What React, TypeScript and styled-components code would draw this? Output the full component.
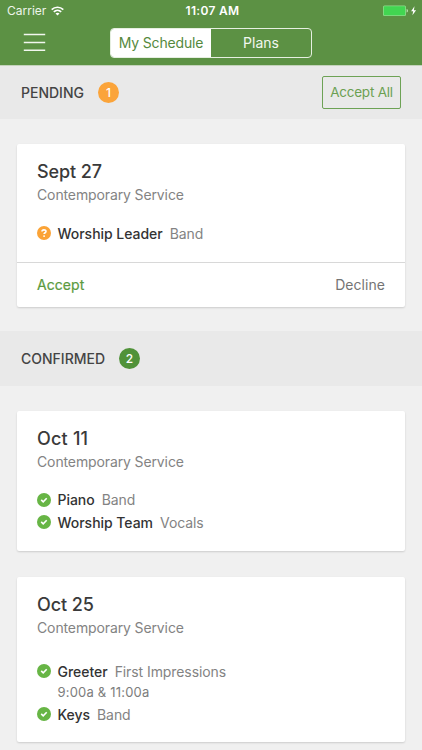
import React from "react";
import styled, { createGlobalStyle } from "styled-components";

const GlobalStyle = createGlobalStyle`
  * { box-sizing: border-box; }
  body {
    margin: 0;
    background: #f0f0f0;
    font-family: Inter, "Liberation Sans", sans-serif;
    font-size: 14px;
    color: #333;
    overflow: hidden;
  }
  button { font: inherit; margin: 0; padding: 0; border: 0; background: none; }
  h2, h3, p, ul { margin: 0; padding: 0; font-weight: 400; }
`;

const Screen = styled.div`
  width: 422px;
  height: 750px;
  overflow: hidden;
  background: #f0f0f0;
`;

const Header = styled.header`
  height: 66px;
  background: #5c9144;
  border-bottom: 1px solid #c3d2bb;
  color: #fff;
`;

const StatusBar = styled.div`
  display: grid;
  grid-template-columns: 1fr auto 1fr;
  align-items: center;
  height: 22px;
  padding: 0 4px 0 7px;
  line-height: 22px;
`;

const Carrier = styled.div`
  display: flex;
  align-items: center;
  gap: 5px;
  font-size: 12px;
  letter-spacing: 0;
  color: #eef5ea;
`;

const Clock = styled.div`
  font-size: 12px;
  font-weight: 600;
  letter-spacing: 0.3px;
`;

const Power = styled.div`
  display: flex;
  justify-content: flex-end;
`;

const NavBar = styled.nav`
  display: flex;
  align-items: center;
  height: 42px;
  padding-left: 23px;
`;

const MenuButton = styled.button`
  display: flex;
  width: 23px;
  margin-right: 64px;
`;

const Segments = styled.div`
  display: flex;
  width: 202px;
  height: 30px;
  border: 1px solid #e6efe1;
  border-radius: 4px;
  overflow: hidden;
`;

const Segment = styled.button<{ $active?: boolean }>`
  flex: 1;
  line-height: 28px;
  letter-spacing: ${(p) => (p.$active ? -0.17 : 0)}px;
  background: ${(p) => (p.$active ? "#fff" : "transparent")};
  color: ${(p) => (p.$active ? "#55893d" : "#f2f7ef")};
`;

const SectionBar = styled.div<{ $height: number }>`
  display: flex;
  align-items: center;
  height: ${(p) => p.$height}px;
  padding: 0 21px;
  background: #e9e9e9;
`;

const SectionTitle = styled.h2`
  font-size: 14px;
  line-height: 21px;
  font-weight: 500;
  color: #444;
`;

const Count = styled.span<{ $color: string }>`
  width: 21px;
  height: 21px;
  margin-left: 14px;
  border-radius: 50%;
  background: ${(p) => p.$color};
  color: #fff;
  font-size: 12px;
  font-weight: 500;
  line-height: 21px;
  text-align: center;
`;

const AcceptAll = styled.button`
  width: 79px;
  height: 33px;
  margin-left: auto;
  padding-bottom: 2px;
  border: 1px solid #6da255;
  border-radius: 2px;
  color: #6ba052;
  font-size: 13.5px;
  letter-spacing: -0.22px;
`;

const SectionHeading = styled.div`
  display: flex;
  align-items: center;
  padding-bottom: 1px;
`;

const CardList = styled.div`
  display: flex;
  flex-direction: column;
  gap: 26px;
  padding: 25px 17px 24px;
`;

const Card = styled.article<{ $height: number }>`
  display: flex;
  flex-direction: column;
  height: ${(p) => p.$height}px;
  padding: 15px 20px 0;
  border-radius: 2px;
  background: #fff;
  box-shadow: 0 1px 2px rgba(0, 0, 0, 0.15);
`;

const CardDate = styled.h3<{ $tracking?: number }>`
  font-size: 18px;
  line-height: 25px;
  font-weight: 500;
  letter-spacing: ${(p) => p.$tracking ?? -0.1}px;
  color: #3a3a3a;
`;

const Service = styled.p`
  line-height: 22px;
  letter-spacing: -0.12px;
  color: #838383;
`;

const Assignments = styled.ul<{ $top: number }>`
  margin-top: ${(p) => p.$top}px;
  list-style: none;
`;

const Assignment = styled.li`
  display: flex;
  align-items: center;
  height: 22.5px;
`;

const Role = styled.span`
  margin: 0 7px 0 6.5px;
  font-weight: 500;
  letter-spacing: -0.03px;
  color: #333;
`;

const Team = styled.span`
  letter-spacing: -0.08px;
  color: #838383;
`;

const Times = styled.li`
  padding-left: 20.5px;
  height: 20.5px;
  font-size: 13px;
  line-height: 18px;
  letter-spacing: 0.2px;
  color: #7d7d7d;
`;

const CardActions = styled.footer`
  display: flex;
  align-items: center;
  justify-content: space-between;
  height: 45px;
  margin: auto -20px 0;
  padding: 0 20px 2px;
  border-top: 1px solid #d8d8d8;
`;

const Action = styled.button<{ $primary?: boolean }>`
  letter-spacing: 0.05px;
  -webkit-text-stroke: ${(p) => (p.$primary ? "0.2px" : "0")};
  color: ${(p) => (p.$primary ? "#5b9a3e" : "#747474")};
`;

const WifiIcon = () => (
  <svg width="13" height="10" viewBox="0 0 13 10" fill="none" stroke="#fff" strokeWidth="1.6">
    <path d="M.7 3.6C3.9.4 9.1.4 12.3 3.6M2.8 5.8C4.9 3.8 8.1 3.8 10.2 5.8" />
    <path d="M6.5 9.4 4.5 7.4C5.6 6.4 7.4 6.4 8.5 7.4Z" fill="#fff" stroke="none" />
  </svg>
);

const BatteryIcon = () => (
  <svg width="36" height="12" viewBox="0 0 36 12">
    <rect x="1" y=".5" width="23" height="10.5" rx="1.5" fill="#8edb8a" />
    <rect x="1.8" y="1.3" width="21.4" height="8.9" rx=".7" fill="#42d651" />
    <path d="M24.6 4q1.4.2 1.4 1.7t-1.4 1.7z" fill="#b9e2b3" />
    <path d="M32.5 1.3 29.1 6.3h2.1l-.8 4 3.7-5.1h-2.2z" fill="#fff" />
  </svg>
);

const MenuIcon = () => (
  <svg width="23" height="20" viewBox="0 0 23 20" stroke="#f2f7ef" strokeWidth="1.5">
    <path d="M.8 1.4H22.2M.8 9.5H22.2M.8 17.3H22.2" />
  </svg>
);

const CheckIcon = () => (
  <svg width="14" height="14" viewBox="0 0 14 14">
    <circle cx="7" cy="7" r="7" fill="#67b545" />
    <path d="m4.2 6.9 2 1.9 3.5-3.6" fill="none" stroke="#fff" strokeWidth="1.6" />
  </svg>
);

const QuestionIcon = () => (
  <svg width="14" height="14" viewBox="0 0 14 14">
    <circle cx="7" cy="7" r="7" fill="#fba336" />
    <path d="M5 5.6C5 3.3 9 3.4 9 5.4 9 6.8 7.1 6.7 7.1 8.1" fill="none" stroke="#fff" strokeWidth="1.6" />
    <circle cx="7.1" cy="10.1" r=".95" fill="#fff" />
  </svg>
);

type Entry = { role: string; team: string; times?: string };

const AssignmentRows = ({ entries, pending }: { entries: Entry[]; pending?: boolean }) => (
  <>
    {entries.map((e) => (
      <React.Fragment key={e.role}>
        <Assignment>
          {pending ? <QuestionIcon /> : <CheckIcon />}
          <Role>{e.role}</Role>
          <Team>{e.team}</Team>
        </Assignment>
        {e.times && <Times>{e.times}</Times>}
      </React.Fragment>
    ))}
  </>
);

export default function App() {
  return (
    <Screen>
      <GlobalStyle />
      <Header>
        <StatusBar>
          <Carrier>Carrier <WifiIcon /></Carrier>
          <Clock>11:07 AM</Clock>
          <Power><BatteryIcon /></Power>
        </StatusBar>
        <NavBar>
          <MenuButton aria-label="Menu"><MenuIcon /></MenuButton>
          <Segments>
            <Segment $active>My Schedule</Segment>
            <Segment>Plans</Segment>
          </Segments>
        </NavBar>
      </Header>

      <SectionBar $height={53}>
        <SectionHeading>
          <SectionTitle>PENDING</SectionTitle>
          <Count $color="#fba43a">1</Count>
        </SectionHeading>
        <AcceptAll>Accept All</AcceptAll>
      </SectionBar>
      <CardList>
        <Card $height={163}>
          <CardDate>Sept 27</CardDate>
          <Service>Contemporary Service</Service>
          <Assignments $top={16}>
            <AssignmentRows pending entries={[{ role: "Worship Leader", team: "Band" }]} />
          </Assignments>
          <CardActions>
            <Action $primary>Accept</Action>
            <Action>Decline</Action>
          </CardActions>
        </Card>
      </CardList>

      <SectionBar $height={55}>
        <SectionHeading>
          <SectionTitle>CONFIRMED</SectionTitle>
          <Count $color="#509239">2</Count>
        </SectionHeading>
      </SectionBar>
      <CardList>
        <Card $height={140}>
          <CardDate $tracking={0.2}>Oct 11</CardDate>
          <Service>Contemporary Service</Service>
          <Assignments $top={15.5}>
            <AssignmentRows
              entries={[
                { role: "Piano", team: "Band" },
                { role: "Worship Team", team: "Vocals" },
              ]}
            />
          </Assignments>
        </Card>
        <Card $height={165}>
          <CardDate>Oct 25</CardDate>
          <Service>Contemporary Service</Service>
          <Assignments $top={21}>
            <AssignmentRows
              entries={[
                { role: "Greeter", team: "First Impressions", times: "9:00a & 11:00a" },
                { role: "Keys", team: "Band" },
              ]}
            />
          </Assignments>
        </Card>
      </CardList>
    </Screen>
  );
}
